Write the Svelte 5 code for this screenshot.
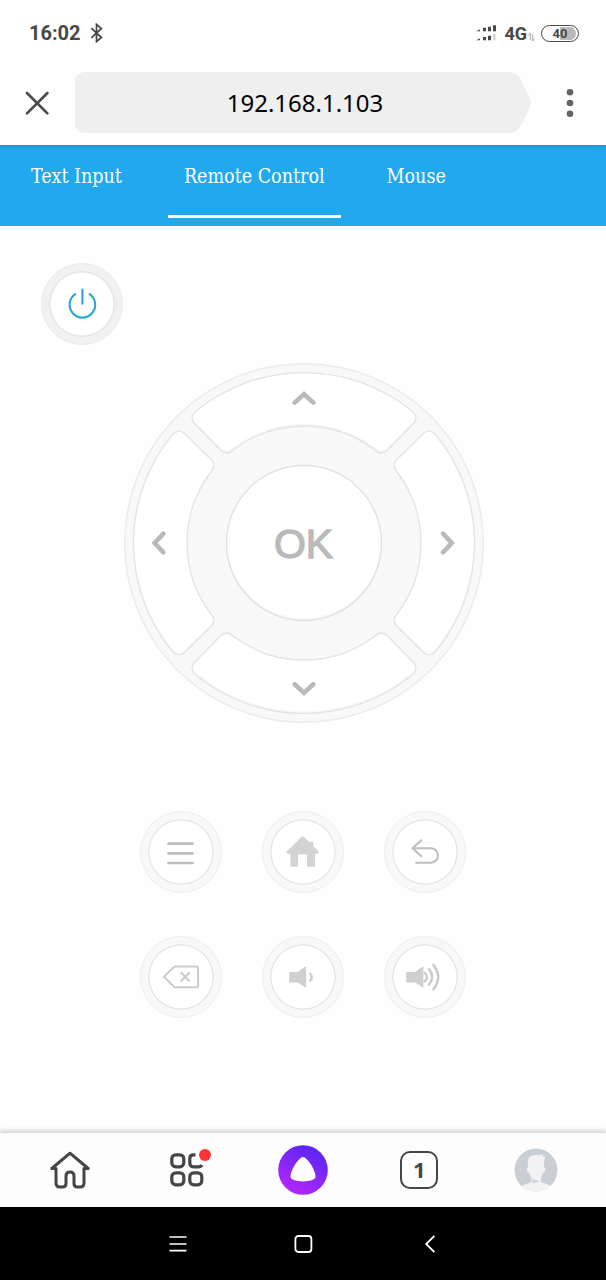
<script>
    let active = "Remote Control";
    let tabs = ["Text Input", "Remote Control", "Mouse"];

    // every icon is drawn on the same 82x82 field as its button
    let keys = [
        { name: "Menu", icon: "menu" },
        { name: "Home", icon: "home" },
        { name: "Back", icon: "back" },
        { name: "Delete", icon: "delete" },
        { name: "Volume down", icon: "down" },
        { name: "Volume up", icon: "up" }
    ];

    let segment = "M-108-131.9A170.5 170.5 0 0 1 108-131.9Q115-126 109.5-119.5L83.5-93Q78-87 71-93A117 117 0 0 0-71-93Q-78-87-83.5-93L-109.5-119.5Q-115-126-108-131.9Z";
    let turns = [0, 90, 180, 270];
</script>

<div class="phone">
    <header class="status">
        <div class="left">
            <span class="time">16:02</span>
            <svg width="14" height="20" viewBox="0 0 14 20"><path d="M1.3 5.2 11.4 14.5 6.5 18.6V1.4l4.9 4.1L1.3 14.8" fill="none" stroke="#484848" stroke-width="1.7" /></svg>
        </div>
        <div class="right">
            <svg width="22" height="18" viewBox="0 0 22 18">
                <path d="M1 7.3 5 5.5V7.3ZM8 3.8h3v3.5H8ZM13 2.7h3v4.6h-3ZM18 1.2h3v6.1h-3ZM1 16.3l4-1.8v1.8ZM8 13h3v3.3H8ZM13 11.8h3v4.5h-3Z" fill="#484848" />
                <path d="M18.3 10h2.3v6.3h-2.3Z" fill="#d2d2d2" />
            </svg>
            <span class="net">4G</span>
            <svg class="data" width="7" height="10" viewBox="0 0 7 10"><path d="M.5 3.5 2.3 1v7M6.5 6.5 4.7 9V2" fill="none" stroke="#aaa" /></svg>
            <div class="battery"><span>40</span></div>
        </div>
    </header>

    <div class="address">
        <svg class="close" width="26" height="26" viewBox="0 0 26 26"><path d="M3 3l20.4 20.4M23.4 3 3 23.4" stroke="#4c4c4c" stroke-width="2.7" stroke-linecap="round" /></svg>
        <div class="url"><span>192.168.1.103</span></div>
        <svg width="8" height="30" viewBox="0 0 8 30" fill="#636363"><circle cx="4" cy="4.2" r="3.3" /><circle cx="4" cy="15" r="3.3" /><circle cx="4" cy="25.8" r="3.3" /></svg>
    </div>

    <nav class="tabs">
        {#each tabs as tab}
        <button class:active={active === tab} on:click={() => active = tab}>{tab}</button>
        {/each}
    </nav>

    <main>
        <button class="key power" aria-label="Power">
            <svg viewBox="0 0 82 82"><path d="M41.4 26.6v14.2M34.2 31.2a12.8 12.8 0 1 0 14.4 0" fill="none" stroke="#2ba3dc" stroke-width="2.1" stroke-linecap="round" /></svg>
        </button>

        <svg class="pad" width="362" height="362" viewBox="-181 -181 362 362">
            <defs>
                <clipPath id="seg"><path d={segment} /></clipPath>
                <clipPath id="mid"><circle r="77.5" /></clipPath>
            </defs>
            <circle r="179.3" fill="#f8f8f8" stroke="#ebebeb" stroke-width="1.4" />
            {#each turns as turn}
            <g transform="rotate({turn})">
                <path d={segment} fill="#f8f8f8" />
                <g clip-path="url(#seg)">
                    <g transform="rotate({-turn}) translate(0 -3) rotate({turn})"><path d={segment} fill="#fff" stroke="#fff" stroke-width="1" /></g>
                </g>
                <path d={segment} fill="none" stroke="#e3e3e3" stroke-width="1.3" />
            </g>
            {/each}
            <circle r="77.5" fill="#f8f8f8" />
            <circle cy="-3" r="77.5" fill="#fff" clip-path="url(#mid)" />
            <circle r="77.5" fill="none" stroke="#e0e0e0" stroke-width="1.3" />
            <g fill="none" stroke="#bababa" stroke-width="4.6" stroke-linecap="round">
                <path d="M-9.4-140.4 0-148.8 9.4-140.4" />
                <path d="M-9.4 141.2 0 149.8 9.4 141.2" />
                <path d="M-140.6-9.4-149.4 0-140.6 9.4" />
                <path d="M139-9.4 147.8 0 139 9.4" />
            </g>
            <text x="-.5" y="14.7" text-anchor="middle">OK</text>
        </svg>

        <div class="keys">
            {#each keys as { name, icon }}
            <button class="key" aria-label={name}>
                <svg viewBox="0 0 82 82" fill="none" stroke="#bebebe" stroke-width="2.4" stroke-linecap="round" stroke-linejoin="round">
                    {#if icon === "menu"}
                    <path d="M28.5 32.7h24M28.5 42.4h24M28.5 52h24" stroke-width="2.7" />
                    {:else if icon === "home"}
                    <path d="M40.5 25 48.5 32V30.2h2.7v4.5l5.3 5.8v2.3H53V55.7H45V43.5H36V55.7H28.5V42.8h-4v-2.3Z" fill="#d3d3d3" stroke="none" />
                    {:else if icon === "back"}
                    <path d="M37.3 29.4 28.5 37.3l8.8 8M29 37.3H46.8a7.2 7.2 0 0 1 0 14.4H32.2" stroke-width="2.1" />
                    {:else if icon === "delete"}
                    <path d="M24 40.8 34.5 30.4H56.6q1.5 0 1.5 1.5V49.7q0 1.5-1.5 1.5H34.5ZM41.2 36.8l8 8M49.2 36.8l-8 8" stroke="#ccc" stroke-width="2" />
                    {:else if icon === "down"}
                    <path d="M27.2 36h8.5l8.5-6v21.7l-8.5-5.2H27.2Z" fill="#cfcfcf" stroke="none" />
                    <path d="M47.6 37q4.3 4.2 0 8.4" stroke="#cfcfcf" stroke-linecap="butt" />
                    {:else}
                    <path d="M22.2 36h9l8.2-6v21.7l-8.2-5.2h-9Z" fill="#cfcfcf" stroke="none" />
                    <path d="M40.8 37q4.4 4.2 0 8.4M45 33.3q6.3 7.7 0 15.4M49.3 28.8q9.8 12.3 0 24.6" stroke="#c9c9c9" />
                    {/if}
                </svg>
            </button>
            {/each}
        </div>
    </main>

    <footer class="browser">
        <svg width="42" height="40" viewBox="0 0 42 40" fill="none" stroke="#444548" stroke-width="3" stroke-linejoin="round" stroke-linecap="round">
            <path d="M21 3.2 2.8 18.5H7V33q0 4 4 4h2.5q3.5 0 3.5-3.5V26q0-4 4-4t4 4v7.5q0 3.5 3.5 3.5H31q4 0 4-4V18.5h4.2Z" />
        </svg>
        <div class="apps">
            <svg width="34" height="34" viewBox="0 0 34 34" fill="none" stroke="#444548" stroke-width="3.2">
                <rect x="1.8" y="1.8" width="12" height="12" rx="4" />
                <path d="M25.5 1.8H23.5Q19.8 1.8 19.8 5.5V10Q19.8 13.8 23.5 13.8H28Q31 13.8 32 12" />
                <rect x="1.8" y="19.8" width="12" height="12" rx="4" />
                <rect x="19.8" y="19.8" width="12" height="12" rx="4" />
            </svg>
            <i class="badge"></i>
        </div>
        <svg width="50" height="50" viewBox="0 0 50 50">
            <defs><linearGradient id="alice" x1=".25" y1="1" x2=".75" y2="0"><stop offset="0" stop-color="#b827fb" /><stop offset="1" stop-color="#5426f3" /></linearGradient></defs>
            <circle cx="25" cy="25" r="24.8" fill="url(#alice)" />
            <path d="M25 12C21 12 12.5 25 12.5 31.5 12.5 38 37.5 38 37.5 31.5 37.5 25 29 12 25 12Z" fill="#fff" />
        </svg>
        <div class="count">1</div>
        <svg width="44" height="44" viewBox="0 0 44 44">
            <defs><clipPath id="face"><circle cx="22" cy="22" r="21.4" /></clipPath></defs>
            <g clip-path="url(#face)">
                <rect width="44" height="44" fill="#c9ced4" />
                <path d="M5 40Q10 36 17.5 34V30L15 24.5Q12.5 24 13 19.5L14.3 19.5Q13 11 16 8.5 20 6 26 7L29 6 28.5 8.5 31.5 8.5Q30 10 30 19.5L31.3 19.5Q31.5 24 29.3 24.5L27 30V34Q34 36 40 40V44H5Z" fill="#f2f2f2" />
                <path d="M18.6 30.5q3 3.4 7.5 1.2-3.2 3.7-6.5 2.5l.3 2-1.3-1Z" fill="#c9ced4" />
            </g>
        </svg>
    </footer>

    <footer class="system">
        <svg width="18" height="18" viewBox="0 0 18 18"><path d="M.5 2h17M.5 9h17M.5 15.7h17" stroke="#fff" stroke-width="1.7" /></svg>
        <svg width="20" height="20" viewBox="0 0 20 20"><rect x="1.4" y="2" width="16" height="16" rx="3" fill="none" stroke="#fff" stroke-width="1.8" /></svg>
        <svg width="12" height="20" viewBox="0 0 12 20"><path d="M10.4 1.8 2.2 10l8.2 8.2" fill="none" stroke="#fff" stroke-width="1.8" /></svg>
    </footer>
</div>

<style>
    :global(body) {
        background: #fff;
    }
    .phone {
        width: 606px;
        height: 1280px;
        display: flex;
        flex-direction: column;
        overflow: hidden;
        background: #fefefe;
    }
    svg {
        display: block;
        flex: none;
    }
    button {
        border: none;
        padding: 0;
        background: none;
        cursor: pointer;
    }

    .status {
        height: 66px;
        box-sizing: border-box;
        padding: 0 27px 0 29px;
        display: flex;
        justify-content: space-between;
        align-items: center;
        font-family: Roboto, sans-serif;
        color: #484848;
    }
    .left, .right {
        display: flex;
        align-items: center;
    }
    .left {
        gap: 9px;
    }
    .time {
        font-size: 20px;
        font-weight: 700;
    }
    .net {
        font-size: 18px;
        font-weight: 700;
        margin: 0 1px 0 7px;
    }
    .data {
        margin: 7px 6px 0 0;
    }
    .battery {
        box-sizing: border-box;
        width: 38px;
        height: 17px;
        border: 1.5px solid #484848;
        border-radius: 9px;
        padding: 1px 2px;
        background: linear-gradient(90deg, transparent 50%, #b9b9b9 50%) content-box;
        display: flex;
        justify-content: center;
        align-items: center;
        font-size: 13px;
        font-weight: 700;
    }

    .address {
        height: 79px;
        display: flex;
        box-sizing: border-box;
        padding: 6px 32px 12px 24px;
        align-items: center;
    }
    .url {
        width: 456px;
        height: 61px;
        margin: 0 35px 0 25px;
        background: #efefef;
        clip-path: path("M10 0H434Q441 0 445 6L454.5 25.5Q457.5 31 454.5 36.5L445 55Q441 61 434 61H10Q0 61 0 51V10Q0 0 10 0Z");
        display: flex;
        align-items: center;
        justify-content: center;
        font: 24px "Noto Sans", sans-serif;
        color: #000;
    }
    .url span {
        padding-left: 4px;
    }

    .tabs {
        height: 81px;
        flex: none;
        box-sizing: border-box;
        padding: 0 15px;
        display: flex;
        align-items: flex-start;
        background: linear-gradient(#2196d3, #22a8ed 5px);
    }
    .tabs button {
        height: 73px;
        padding: 0 16px 8px;
        margin-right: 30px;
        border-bottom: 3px solid transparent;
        font-family: "DejaVu Serif Condensed", "DejaVu Serif", serif;
        font-stretch: condensed;
        font-size: 19.5px;
        color: #fff;
        white-space: nowrap;
    }
    .tabs .active {
        border-color: #fff;
    }

    main {
        flex: 1;
        display: flex;
        flex-direction: column;
        align-items: center;
    }
    .key {
        box-sizing: border-box;
        width: 82px;
        height: 82px;
        border-radius: 50%;
        border: 1px solid #eee;
        padding: 7px;
        background: #f8f8f8;
    }
    .key svg {
        width: 82px;
        height: 82px;
        margin: -8px;
        background: radial-gradient(circle 33px at 41px 41px, #fff 31px, #e2e2e2 32px, #e2e2e2 32.3px, transparent 33px);
    }
    .power {
        align-self: flex-start;
        margin: 37px 0 0 41px;
        background: #f1f1f1;
        border-color: #ebebeb;
    }
    .pad {
        margin: 17px 0 0 1px;
    }
    .pad text {
        font-family: "Liberation Sans", sans-serif;
        font-size: 41px;
        fill: #bababa;
        stroke: #bababa;
        stroke-width: 1.3px;
    }
    .keys {
        margin-top: 87px;
        display: grid;
        grid-template-columns: repeat(3, 82px);
        gap: 43px 40px;
    }

    .browser {
        height: 74px;
        flex: none;
        box-sizing: border-box;
        padding: 0 12px;
        display: grid;
        grid-template-columns: repeat(5, 1fr);
        place-items: center;
        background: #fdfdfd;
        box-shadow: 0 -1px 5px 1px #ccc;
    }
    .apps {
        position: relative;
    }
    .badge {
        position: absolute;
        top: -4px;
        right: -7px;
        width: 12px;
        height: 12px;
        border-radius: 50%;
        background: #fb3535;
    }
    .count {
        box-sizing: border-box;
        width: 38px;
        height: 38px;
        border: 2.8px solid #444548;
        border-radius: 10px;
        text-align: center;
        font: 700 22px/32px "Noto Sans", sans-serif;
        color: #444548;
    }

    .system {
        height: 73px;
        flex: none;
        box-sizing: border-box;
        padding: 0 113px 0 115px;
        display: grid;
        grid-template-columns: repeat(3, 1fr);
        place-items: center;
        background: #000;
    }
</style>
